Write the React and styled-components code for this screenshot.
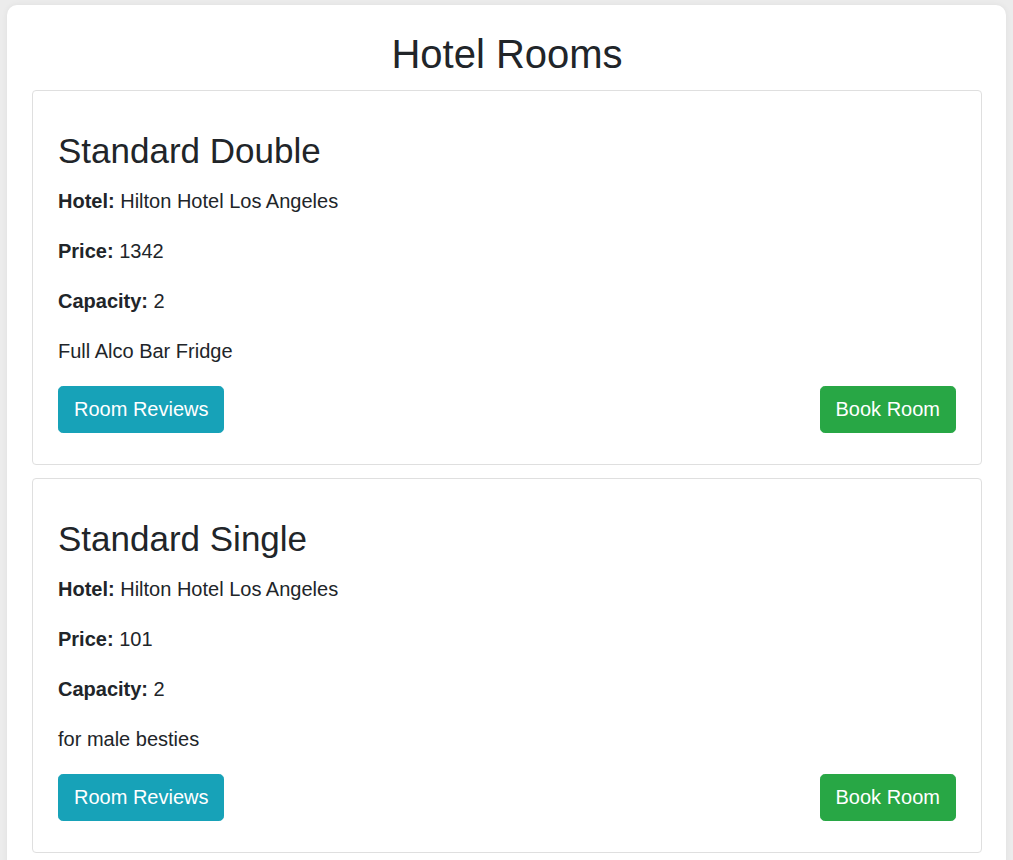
import React from 'react';
import styled, { createGlobalStyle } from 'styled-components';

const GlobalStyle = createGlobalStyle`
  html, body {
    margin: 0;
    padding: 0;
    background: #ececec;
    font-family: "Liberation Sans", Arial, sans-serif;
    color: #212529;
  }
`;

const Page = styled.div`
  padding: 5px 7px 0 7px;
`;

const Container = styled.div`
  background: #fff;
  border-radius: 10px;
  padding: 25px 24px 30px 25px;
  box-shadow: 0 0 6px rgba(0, 0, 0, 0.06);
`;

const Title = styled.h1`
  margin: 0 0 12px;
  font-size: 40px;
  font-weight: 400;
  line-height: 48px;
  text-align: center;
`;

const Card = styled.div`
  border: 1px solid #dfdfdf;
  border-radius: 4px;
  padding: 25px 25px 31px;
  margin-bottom: 13px;
`;

const RoomName = styled.h2`
  margin: 14px 0 14px;
  font-size: 35px;
  font-weight: 400;
  line-height: 42px;
`;

const Line = styled.p`
  margin: 0 0 20px;
  font-size: 20px;
  line-height: 30px;
`;

const Label = styled.strong`
  font-weight: 700;
`;

const Actions = styled.div`
  display: flex;
  justify-content: space-between;
  align-items: center;
`;

const Button = styled.button`
  font-family: inherit;
  font-size: 20px;
  line-height: 29px;
  padding: 8px 15px;
  border: 1px solid ${(p) => p.$color};
  background: ${(p) => p.$color};
  color: #fff;
  border-radius: 4.8px;
  cursor: pointer;
`;

const rooms = [
  { name: 'Standard Double', hotel: 'Hilton Hotel Los Angeles', price: 1342, capacity: 2, description: 'Full Alco Bar Fridge' },
  { name: 'Standard Single', hotel: 'Hilton Hotel Los Angeles', price: 101, capacity: 2, description: 'for male besties' },
];

const App = () => {
  return (
    <>
      <GlobalStyle />
      <Page>
        <Container>
          <Title>Hotel Rooms</Title>
          {rooms.map((room) => (
            <Card key={room.name}>
              <RoomName>{room.name}</RoomName>
              <Line><Label>Hotel:</Label> {room.hotel}</Line>
              <Line><Label>Price:</Label> {room.price}</Line>
              <Line><Label>Capacity:</Label> {room.capacity}</Line>
              <Line>{room.description}</Line>
              <Actions>
                <Button $color="#17a2b8">Room Reviews</Button>
                <Button $color="#28a745">Book Room</Button>
              </Actions>
            </Card>
          ))}
        </Container>
      </Page>
    </>
  );
};

export default App;
